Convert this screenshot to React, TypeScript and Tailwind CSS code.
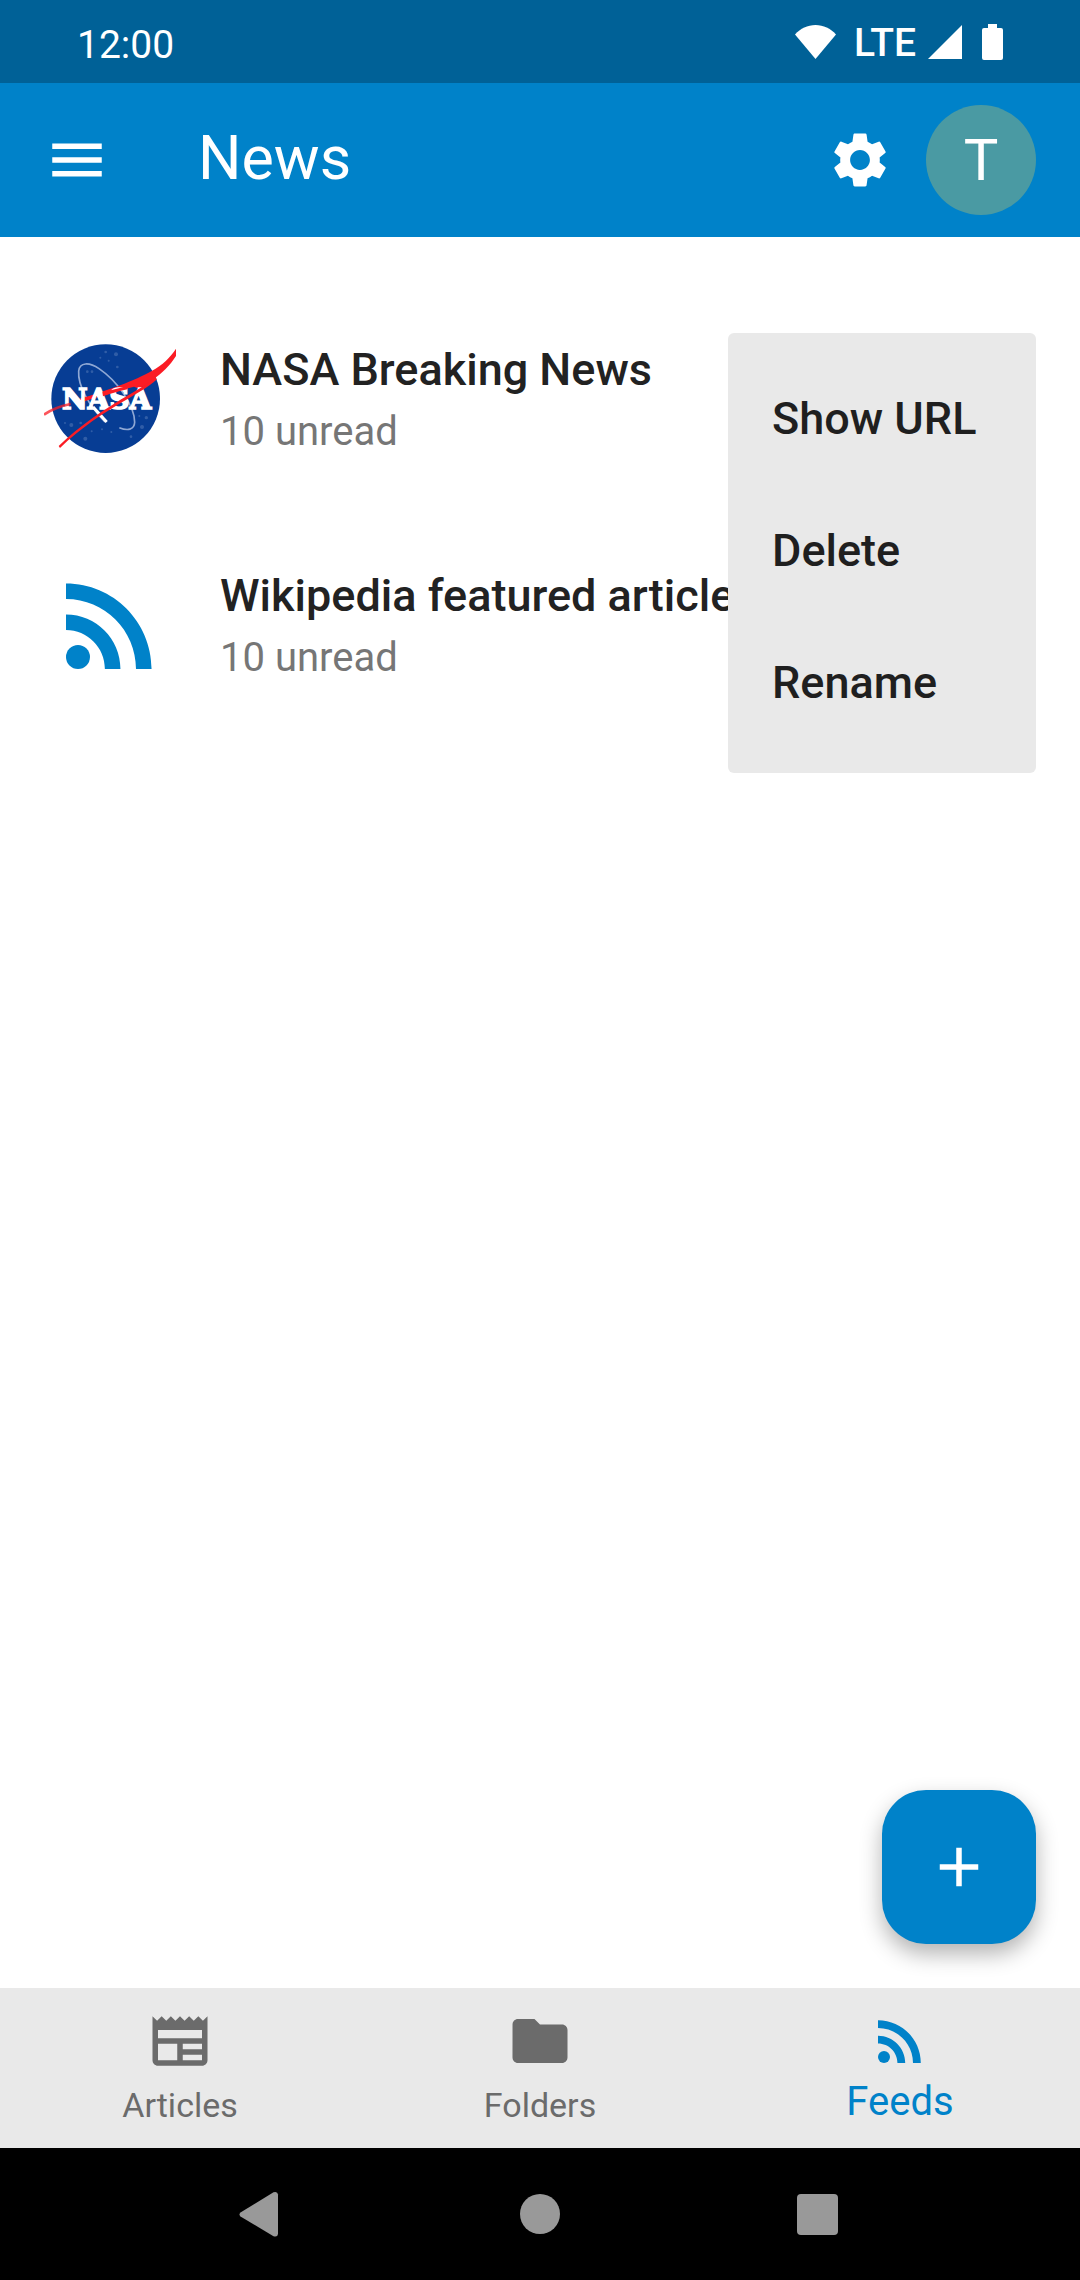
import type { ReactNode } from "react";
import { MdAdd, MdFolder, MdMenu, MdNewspaper, MdRssFeed, MdSettings } from "react-icons/md";

function StatusBar() {
  return (
    <div className="flex h-[83px] items-center justify-between bg-[#006197] px-[77px] text-white">
      <span className="pt-2 text-[39px] leading-none">12:00</span>
      <div className="flex items-center">
        <svg className="h-[34px] w-[41px]" viewBox="0 0 41 34" fill="currentColor" aria-hidden="true">
          <path d="M20.500 34 0 9.500C5.500 3.500 12.500 0 20.500 0S35.500 3.500 41 9.500Z" />
        </svg>
        <span className="ml-[18px] pt-1 text-[39px] leading-none font-medium">LTE</span>
        <svg className="ml-3 h-[34px] w-[34px]" viewBox="0 0 34 34" fill="currentColor" aria-hidden="true">
          <path d="M34 0V34H0Z" />
        </svg>
        <svg className="ml-5 h-[36px] w-[21px]" viewBox="0 0 21 36" fill="currentColor" aria-hidden="true">
          <path d="M6 0h9v4h4a2 2 0 0 1 2 2v28a2 2 0 0 1-2 2H2a2 2 0 0 1-2-2V6a2 2 0 0 1 2-2h4Z" />
        </svg>
      </div>
    </div>
  );
}

function AppBar() {
  return (
    <header className="flex h-[154px] items-center bg-[#0082c9] px-11 text-white">
      <button type="button" aria-label="Open menu">
        <MdMenu size={66} />
      </button>
      <h1 className="ml-[88px] flex-1 pb-1 text-[61px] leading-none">News</h1>
      <button type="button" aria-label="Settings">
        <MdSettings size={66} />
      </button>
      <button
        type="button"
        aria-label="Account T"
        className="ml-[33px] flex size-[110px] items-center justify-center rounded-full bg-[#4a9aa3] text-[58px] leading-none"
      >
        T
      </button>
    </header>
  );
}

function NasaLogo() {
  return (
    <svg className="size-[132px]" viewBox="42 39 396 396" aria-label="NASA">
      <circle cx="227" cy="236" r="163" fill="#073d94" />
      <g fill="#6f8fc4" opacity="0.4">
        <circle cx="227" cy="96" r="4" />
        <circle cx="258" cy="103" r="6" />
        <circle cx="236" cy="122" r="3" />
        <circle cx="262" cy="141" r="4" />
        <circle cx="211" cy="113" r="3" />
        <circle cx="172" cy="155" r="4" />
        <circle cx="186" cy="155" r="4" />
        <circle cx="124" cy="315" r="6" />
        <circle cx="105" cy="309" r="3" />
        <circle cx="152" cy="309" r="4" />
        <circle cx="166" cy="356" r="6" />
        <circle cx="185" cy="334" r="3" />
        <circle cx="216" cy="328" r="3" />
        <circle cx="244" cy="336" r="3" />
        <circle cx="303" cy="350" r="4" />
        <circle cx="336" cy="321" r="6" />
        <circle cx="349" cy="293" r="5" />
        <circle cx="328" cy="288" r="3" />
      </g>
      <path
        d="M225 306C175 255 143 195 146 153C149 126 178 126 207 146C262 183 314 257 314 307C313 330 292 333 268 323"
        fill="none"
        stroke="#8fa8d4"
        strokeWidth="5"
      />
      <path d="M190 262 230 306" stroke="#ffffff" strokeWidth="9" />
      <path
        d="M146 237C230 213 317 181 365 153C398 135 421 112 438 86V108C419 138 397 158 369 179C355 190 342 198 327 206L312 200C267 211 210 230 148 248Z"
        fill="#fb1c24"
      />
      <text
        x="230"
        y="268"
        textAnchor="middle"
        fill="#ffffff"
        stroke="#ffffff"
        strokeWidth="5"
        fontFamily="'DejaVu Serif', serif"
        fontWeight="700"
        fontSize="84"
      >
        NASA
      </text>
      <path d="M42 284C65 268 92 258 122 252" fill="none" stroke="#fb1c24" strokeWidth="8" opacity="0.75" />
      <path d="M217 217C242 211 267 205 292 198V208C266 214 242 221 219 229Z" fill="#fb1c24" />
      <path
        d="M86 378C149 317 225 266 301 222C329 205 350 193 374 170L381 178C350 205 324 218 298 234C221 278 150 325 90 384Z"
        fill="#fb1c24"
      />
    </svg>
  );
}

function FeedRow({ icon, title, unread }: { icon: ReactNode; title: string; unread: number }) {
  return (
    <li>
      <a href="#feed" className="flex items-center px-11 py-[47px]">
        <span className="mr-11 shrink-0">{icon}</span>
        <span className="min-w-0">
          <span className="block truncate text-[45px] leading-[66px] font-medium text-[#222222]">{title}</span>
          <span className="block text-[40px] leading-[58px] text-[#767676]">{unread} unread</span>
        </span>
      </a>
    </li>
  );
}

function FeedMenu() {
  return (
    <div
      role="menu"
      className="absolute top-24 right-11 flex min-w-[308px] flex-col rounded-md bg-[#e9e9e9] py-[22px] text-[45px] font-medium text-[#1f1f1f]"
    >
      {["Show URL", "Delete", "Rename"].map((label) => (
        <button key={label} type="button" role="menuitem" className="h-[132px] px-11 pb-1 text-left">
          {label}
        </button>
      ))}
    </div>
  );
}

function BottomNav() {
  return (
    <nav className="grid h-40 grid-cols-3 bg-[#e9e9e9] pt-5 text-[34px] leading-[62px] text-[#6b6b6b]">
      <a href="#articles" className="flex flex-col items-center">
        <MdNewspaper size={66} />
        Articles
      </a>
      <a href="#folders" className="flex flex-col items-center">
        <MdFolder size={66} />
        Folders
      </a>
      <a href="#feeds" aria-current="page" className="flex flex-col items-center text-[40px] leading-[56px] text-[#0082c9]">
        <MdRssFeed size={66} />
        Feeds
      </a>
    </nav>
  );
}

function SystemNav() {
  return (
    <div className="flex h-[132px] items-center justify-center bg-black text-[#999999]">
      <button type="button" aria-label="Back" className="flex w-[277px] justify-center">
        <svg className="size-[60px]" viewBox="0 0 60 60" fill="currentColor" aria-hidden="true">
          <path d="M40.500 8.300 7.500 28.500Q5.500 30.500 7.500 32.500L40.500 52.200Q44.500 53.500 45 50V10.500Q44.500 7 40.500 8.300Z" />
        </svg>
      </button>
      <button type="button" aria-label="Home" className="flex w-[277px] justify-center">
        <span className="size-10 rounded-full bg-current" />
      </button>
      <button type="button" aria-label="Recent apps" className="flex w-[277px] justify-center">
        <span className="size-[41px] rounded-[4px] bg-current" />
      </button>
    </div>
  );
}

export default function App() {
  return (
    <div className="flex min-h-screen flex-col bg-white font-['Roboto',sans-serif]">
      <StatusBar />
      <AppBar />
      <main className="relative flex-1 pt-[49px]">
        <ul>
          <FeedRow icon={<NasaLogo />} title="NASA Breaking News" unread={10} />
          <FeedRow
            icon={<MdRssFeed size={132} className="text-[#0082c9]" />}
            title="Wikipedia featured articles feed"
            unread={10}
          />
        </ul>
        <FeedMenu />
        <button
          type="button"
          aria-label="Add feed"
          className="absolute right-11 bottom-11 flex size-[154px] items-center justify-center rounded-[44px] bg-[#0082c9] text-white shadow-[0_10px_22px_rgba(0,0,0,0.3)]"
        >
          <MdAdd size={66} />
        </button>
      </main>
      <BottomNav />
      <SystemNav />
    </div>
  );
}
